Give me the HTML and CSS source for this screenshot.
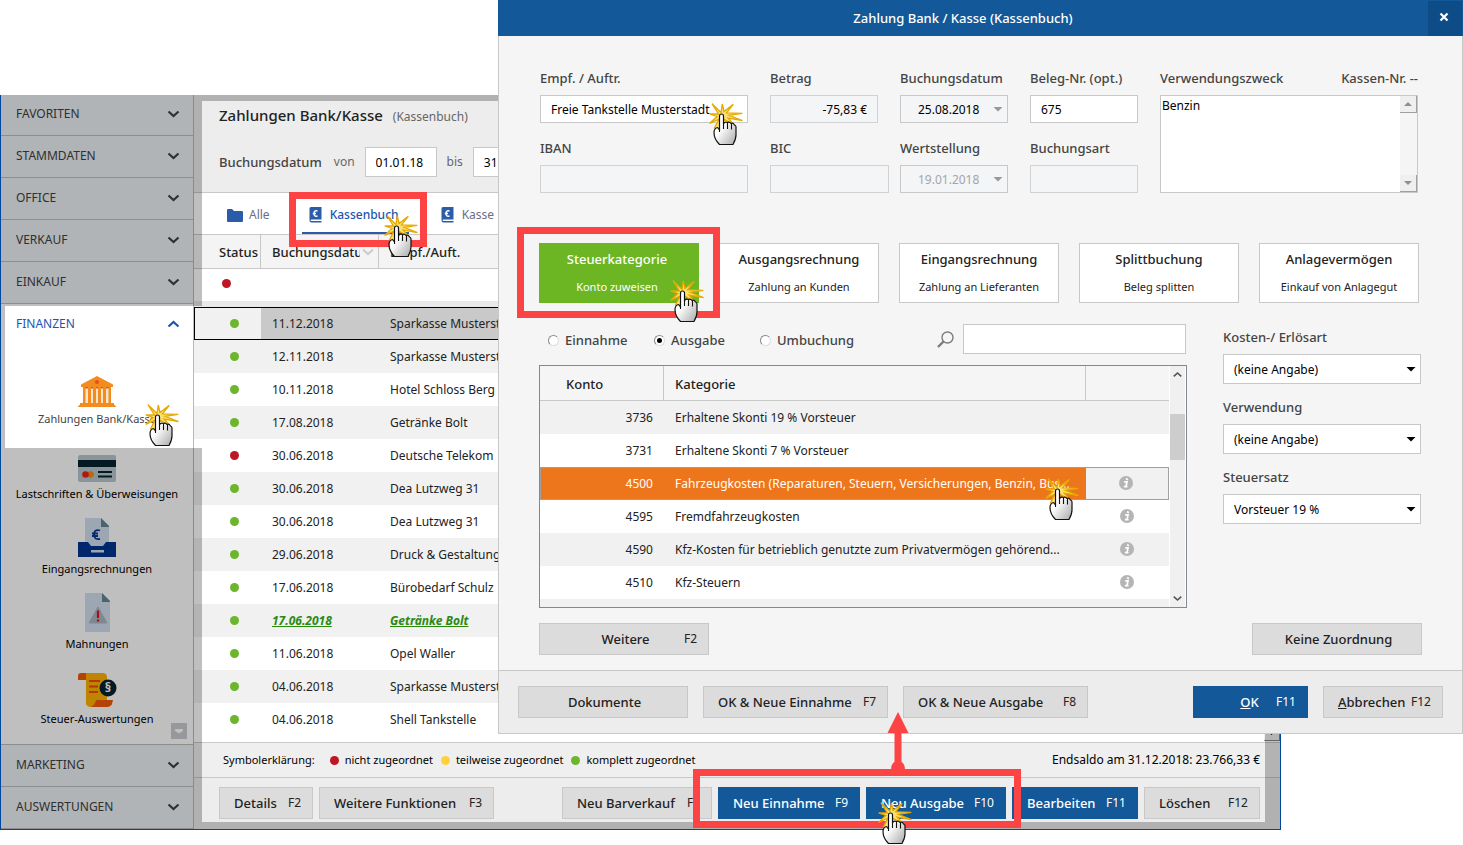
FILE: index.html
```html
<!DOCTYPE html>
<html lang="de">
<head>
  <meta charset="UTF-8">
  <meta name="viewport" content="width=device-width, initial-scale=1.0">
  <title>Zahlung Bank / Kasse (Kassenbuch)</title>
  <link rel="stylesheet" href="styles.css">
</head>
<body>
  <!-- Shared symbols -->
  <svg class="symbols" aria-hidden="true">
    <defs>
      <linearGradient id="hand-fill" x1="0" y1="0" x2="1" y2="1">
        <stop offset="0.4" stop-color="#ffffff"/>
        <stop offset="1" stop-color="#a8a8a8"/>
      </linearGradient>
    </defs>
    <symbol id="cursor" viewBox="0 0 36 44">
      <path d="M12 10.500L13.300 2L15 9.500L24.300 2.300L17.500 10.800L33.300 11.300L20 13.300L33.500 18.700L19 16L26 24L15.500 17.500L9 27.500L5.500 26L10 17L0.700 21.300L8 14.500L0.700 12L9.500 12L3 1.700Z" fill="#fbe277" stroke="#e5a900" stroke-width="1.300"/>
      <path d="M5 30.500Q5 26.500 8.500 25.500L10.500 28V14Q10.500 12 12.500 12T14.500 14V22Q15.500 19.500 18.500 20.500Q20.500 19.500 22 21.500Q24 20.500 25.500 23Q27 23.500 27 25V33Q27 37 24 42.500H10.500Q5 37 5 30.500Z" fill="url(#hand-fill)" stroke="#111" stroke-width="1.200" stroke-linejoin="round"/>
      <path d="M10.500 27V30M14.500 22V27M18.500 21V27M22.500 22V27.500" stroke="#111" stroke-width="1.100" fill="none"/>
    </symbol>
    <symbol id="chevron" viewBox="0 0 12 8">
      <path d="M1 1.500L6 6L11 1.500" fill="none" stroke="currentColor" stroke-width="2.200"/>
    </symbol>
    <symbol id="book" viewBox="0 0 13 16">
      <path d="M2 0H12.500V12.500H2.500Q1.500 12.500 1.500 13.200T2.500 14H12.500V15.500H2.500Q0.500 15.500 0.500 13.500V1.500Q0.500 0 2 0Z" fill="#2a5caa"/>
      <path d="M8.500 4Q5 3 5 6.500T8.500 9M3.800 6.500H7" fill="none" stroke="#fff" stroke-width="1.400"/>
    </symbol>
    <symbol id="info" viewBox="0 0 14 14">
      <circle cx="7" cy="7" r="7" fill="#b5b5b5"/>
      <path d="M5.200 5.800H8L7 10.700H8.500M4.900 10.700H7M7.200 2.500L8.800 3.800" fill="none" stroke="#fff" stroke-width="1.700"/>
    </symbol>
  </svg>

  <div class="desktop">
    <!-- Main window -->
    <div class="app">
      <nav class="sidebar">
        <button class="nav-item">FAVORITEN<svg><use href="#chevron"/></svg></button>
        <button class="nav-item">STAMMDATEN<svg><use href="#chevron"/></svg></button>
        <button class="nav-item">OFFICE<svg><use href="#chevron"/></svg></button>
        <button class="nav-item">VERKAUF<svg><use href="#chevron"/></svg></button>
        <button class="nav-item">EINKAUF<svg><use href="#chevron"/></svg></button>
        <div class="nav-group">
          <button class="nav-item open">FINANZEN<svg><use href="#chevron"/></svg></button>
          <a class="tile" href="#">
            <svg width="40" height="31" viewBox="0 0 40 31">
              <path d="M20 0L36 8.500V11H4V8.500Z" fill="#f28c1e"/>
              <circle cx="20" cy="6" r="2" fill="#e8501e"/>
              <path d="M6 11H34V27H6Z" fill="#fbe6cc"/>
              <path d="M6 11H34V12.500H6Z" fill="#e8501e"/>
              <path d="M6 11H8.500V27H6ZM11 11H14V27H11ZM16 11H19V27H16ZM21 11H24V27H21ZM26 11H29V27H26ZM31.500 11H34V27H31.500ZM3 27H37V28.500L39.500 31H0.500L3 28.500Z" fill="#f28c1e"/>
            </svg>
            <span>Zahlungen Bank/Kasse</span>
          </a>
          <a class="tile dark" href="#">
            <svg width="38" height="27" viewBox="0 0 38 27">
              <rect width="38" height="27" rx="2" fill="#b9c7ce"/>
              <rect y="5" width="38" height="7" fill="#04232e"/>
              <circle cx="12.500" cy="19.500" r="3.300" fill="#f28c1e"/>
              <circle cx="7.500" cy="19.500" r="3.300" fill="#e8201e"/>
              <path d="M20 17H34M20 21.500H34" stroke="#04232e" stroke-width="2"/>
            </svg>
            <span>Lastschriften &amp; Überweisungen</span>
          </a>
          <a class="tile dark" href="#">
            <svg width="38" height="39" viewBox="0 0 38 39">
              <path d="M7 0H23L31 8V30H7Z" fill="#d2dff0"/>
              <path d="M23 0L31 8V9H23Z" fill="#63868f"/>
              <path d="M22 12.500Q16 11 16 16.500T22 21M14 15.500H20M14 18H20" fill="none" stroke="#0a3892" stroke-width="1.800"/>
              <path d="M0 24H10L13 28H25L28 24H38V39H0Z" fill="#003591"/>
              <rect x="13" y="32" width="13" height="2.500" fill="#d2dff0"/>
            </svg>
            <span>Eingangsrechnungen</span>
          </a>
          <a class="tile dark" href="#">
            <svg width="25" height="39" viewBox="0 0 25 39">
              <path d="M0 0H17L25 8V39H0Z" fill="#d2dff0"/>
              <path d="M17 0L25 8V9H17Z" fill="#63868f"/>
              <path d="M13 14L22 30H4Z" fill="#abb5bf" stroke="#abb5bf" stroke-linejoin="round"/>
              <path d="M13 17.500V25M13 26.500V28.500" stroke="#e0102a" stroke-width="2.200"/>
            </svg>
            <span>Mahnungen</span>
          </a>
          <a class="tile dark" href="#">
            <svg width="39" height="34" viewBox="0 0 39 34">
              <path d="M4 0H26Q29 1 29 4V29H34V32L30 34H12Q8 33 8 30V5Z" fill="#ffb000"/>
              <path d="M3 0H8V7H0V3Q0 0 3 0ZM18 27H35Q34 34 29 34H13Q17 32 18 27Z" fill="#f05a0a"/>
              <path d="M11 8H22M11 13.500H20M11 19H20" stroke="#f04a0a" stroke-width="1.800"/>
              <circle cx="30" cy="15" r="8.500" fill="#04232e"/>
              <text x="30" y="19" class="para">§</text>
            </svg>
            <span>Steuer-Auswertungen</span>
          </a>
          <button class="nav-more" aria-label="Mehr anzeigen"></button>
        </div>
        <button class="nav-item">MARKETING<svg><use href="#chevron"/></svg></button>
        <button class="nav-item">AUSWERTUNGEN<svg><use href="#chevron"/></svg></button>
      </nav>

      <main class="content">
        <header class="content-head">
          <h1>Zahlungen Bank/Kasse <small>(Kassenbuch)</small></h1>
          <div class="filter">
            <strong>Buchungsdatum</strong>
            <label for="from">von</label>
            <input id="from" type="text" value="01.01.18">
            <label for="to">bis</label>
            <input id="to" type="text" value="31.12.18">
          </div>
        </header>

        <div class="tabs">
          <button class="tab">
            <svg width="16" height="13" viewBox="0 0 16 13"><path d="M0 1Q0 0 1 0H5L7 2H15Q16 2 16 3V12Q16 13 15 13H1Q0 13 0 12Z" fill="#2a5caa"/></svg>
            Alle
          </button>
          <button class="tab book active"><svg width="13" height="16"><use href="#book"/></svg>Kassenbuch</button>
          <button class="tab book"><svg width="13" height="16"><use href="#book"/></svg>Kasse</button>
        </div>

        <div class="bookings-wrap">
          <table class="bookings">
            <thead>
              <tr>
                <th class="c-status">Status</th>
                <th class="c-date"><div class="sortable"><span>Buchungsdatum</span><svg><use href="#chevron"/></svg></div></th>
                <th>Empf./Auft.</th>
              </tr>
            </thead>
            <tbody>
              <tr class="filter-row"><td><i class="dot red"></i></td><td></td><td></td></tr>
              <tr class="current"><td><i class="dot"></i></td><td>11.12.2018</td><td>Sparkasse Musterstadt</td></tr>
              <tr><td><i class="dot"></i></td><td>12.11.2018</td><td>Sparkasse Musterstadt</td></tr>
              <tr><td><i class="dot"></i></td><td>10.11.2018</td><td>Hotel Schloss Berg</td></tr>
              <tr><td><i class="dot"></i></td><td>17.08.2018</td><td>Getränke Bolt</td></tr>
              <tr><td><i class="dot red"></i></td><td>30.06.2018</td><td>Deutsche Telekom</td></tr>
              <tr><td><i class="dot"></i></td><td>30.06.2018</td><td>Dea Lutzweg 31</td></tr>
              <tr><td><i class="dot"></i></td><td>30.06.2018</td><td>Dea Lutzweg 31</td></tr>
              <tr><td><i class="dot"></i></td><td>29.06.2018</td><td>Druck &amp; Gestaltung</td></tr>
              <tr><td><i class="dot"></i></td><td>17.06.2018</td><td>Bürobedarf Schulz</td></tr>
              <tr class="marked"><td><i class="dot"></i></td><td>17.06.2018</td><td>Getränke Bolt</td></tr>
              <tr><td><i class="dot"></i></td><td>11.06.2018</td><td>Opel Waller</td></tr>
              <tr><td><i class="dot"></i></td><td>04.06.2018</td><td>Sparkasse Musterstadt</td></tr>
              <tr><td><i class="dot"></i></td><td>04.06.2018</td><td>Shell Tankstelle</td></tr>
            </tbody>
          </table>
          <div class="list-scroll"><i class="arrow-down"></i></div>
        </div>

        <div class="legend">
          <span class="legend-title">Symbolerklärung:</span>
          <i class="dot red"></i><span>nicht zugeordnet</span>
          <i class="dot yellow"></i><span>teilweise zugeordnet</span>
          <i class="dot"></i><span>komplett zugeordnet</span>
          <span class="balance">Endsaldo am 31.12.2018: 23.766,33 €</span>
        </div>

        <footer class="actions">
          <button class="btn details">Details<kbd>F2</kbd></button>
          <button class="btn functions">Weitere Funktionen<kbd>F3</kbd></button>
          <button class="btn cash-sale push">Neu Barverkauf<kbd>F8</kbd></button>
          <button class="btn primary income">Neu Einnahme<kbd>F9</kbd></button>
          <button class="btn primary expense">Neu Ausgabe<kbd>F10</kbd></button>
          <button class="btn primary edit">Bearbeiten<kbd>F11</kbd></button>
          <button class="btn delete">Löschen<kbd>F12</kbd></button>
        </footer>
      </main>

      <div class="shade"></div>
    </div>

    <!-- Dialog -->
    <section class="dialog" role="dialog" aria-labelledby="dialog-title">
      <header class="titlebar">
        <h2 id="dialog-title">Zahlung Bank / Kasse (Kassenbuch)</h2>
        <button class="close" aria-label="Schließen"><svg width="10" height="10" viewBox="0 0 10 10"><path d="M1.500 1.500L8.500 8.500M8.500 1.500L1.500 8.500" stroke="#fff" stroke-width="2.200"/></svg></button>
      </header>

      <div class="dialog-body">
        <div class="fields">
          <div class="field"><label for="payee">Empf. / Auftr.</label><input id="payee" type="text" value="Freie Tankstelle Musterstadt"></div>
          <div class="field"><label for="amount">Betrag</label><input id="amount" class="amount" type="text" value="-75,83 €" readonly></div>
          <div class="field"><label for="bookdate">Buchungsdatum</label><div class="select muted"><select id="bookdate"><option>25.08.2018</option></select></div></div>
          <div class="field"><label for="receipt">Beleg-Nr. (opt.)</label><input id="receipt" type="text" value="675"></div>
          <div class="field purpose">
            <div class="label-row"><label for="purpose">Verwendungszweck</label><span>Kassen-Nr. --</span></div>
            <div class="memo">
              <textarea id="purpose">Benzin</textarea>
              <div class="memo-scroll"><i class="arrow-up"></i><i class="arrow-down"></i></div>
            </div>
          </div>
          <div class="field"><label for="iban">IBAN</label><input id="iban" type="text" readonly></div>
          <div class="field bic"><label for="bic">BIC</label><input id="bic" type="text" readonly></div>
          <div class="field"><label for="valuta">Wertstellung</label><div class="select muted"><select id="valuta" disabled><option>19.01.2018</option></select></div></div>
          <div class="field"><label for="booking-type">Buchungsart</label><input id="booking-type" type="text" readonly></div>
        </div>

        <div class="cards">
          <button class="card active"><strong>Steuerkategorie</strong><span>Konto zuweisen</span></button>
          <button class="card"><strong>Ausgangsrechnung</strong><span>Zahlung an Kunden</span></button>
          <button class="card"><strong>Eingangsrechnung</strong><span>Zahlung an Lieferanten</span></button>
          <button class="card"><strong>Splittbuchung</strong><span>Beleg splitten</span></button>
          <button class="card"><strong>Anlagevermögen</strong><span>Einkauf von Anlagegut</span></button>
        </div>

        <div class="assign">
          <div class="assign-left">
            <div class="search-row">
              <label class="radio"><input type="radio" name="kind">Einnahme</label>
              <label class="radio"><input type="radio" name="kind" checked>Ausgabe</label>
              <label class="radio"><input type="radio" name="kind">Umbuchung</label>
              <label class="search" for="search" aria-label="Suche"><svg width="17" height="17" viewBox="0 0 17 17"><circle cx="10.500" cy="6.500" r="5.500" fill="none" stroke="#7c7c7c" stroke-width="1.400"/><path d="M6.500 10.500L1 16" stroke="#7c7c7c" stroke-width="2.400"/></svg></label>
              <input id="search" type="text">
            </div>
            <div class="accounts-box">
              <table class="accounts">
                <thead>
                  <tr><th class="c-konto">Konto</th><th>Kategorie</th><th class="c-info"></th></tr>
                </thead>
                <tbody>
                  <tr><td>3736</td><td>Erhaltene Skonti 19 % Vorsteuer</td><td></td></tr>
                  <tr><td>3731</td><td>Erhaltene Skonti 7 % Vorsteuer</td><td></td></tr>
                  <tr class="selected"><td>4500</td><td>Fahrzeugkosten (Reparaturen, Steuern, Versicherungen, Benzin, Bus...</td><td><svg><use href="#info"/></svg></td></tr>
                  <tr><td>4595</td><td>Fremdfahrzeugkosten</td><td><svg><use href="#info"/></svg></td></tr>
                  <tr><td>4590</td><td>Kfz-Kosten für betrieblich genutzte zum Privatvermögen gehörend...</td><td><svg><use href="#info"/></svg></td></tr>
                  <tr><td>4510</td><td>Kfz-Steuern</td><td><svg><use href="#info"/></svg></td></tr>
                  <tr class="rest"><td></td><td></td><td></td></tr>
                </tbody>
              </table>
              <div class="box-scroll">
                <svg class="up"><use href="#chevron"/></svg>
                <i class="thumb"></i>
                <svg><use href="#chevron"/></svg>
              </div>
            </div>
          </div>

          <div class="assign-right">
            <div class="field"><label for="cost">Kosten-/ Erlösart</label><div class="select"><select id="cost"><option>(keine Angabe)</option></select></div></div>
            <div class="field"><label for="usage">Verwendung</label><div class="select"><select id="usage"><option>(keine Angabe)</option></select></div></div>
            <div class="field"><label for="tax">Steuersatz</label><div class="select"><select id="tax"><option>Vorsteuer 19 %</option></select></div></div>
          </div>
        </div>

        <div class="assign-actions">
          <button class="btn wide">Weitere<kbd>F2</kbd></button>
          <button class="btn wide">Keine Zuordnung</button>
        </div>
      </div>

      <footer class="dialog-foot">
        <button class="btn wide">Dokumente</button>
        <button class="btn save">OK &amp; Neue Einnahme<kbd>F7</kbd></button>
        <button class="btn save">OK &amp; Neue Ausgabe<kbd>F8</kbd></button>
        <button class="btn primary ok push"><span class="grow"><u>O</u>K</span><kbd>F11</kbd></button>
        <button class="btn cancel"><span><u>A</u>bbrechen</span><kbd>F12</kbd></button>
      </footer>
    </section>

    <!-- Highlights and pointers -->
    <div class="mark mark-tab"></div>
    <div class="mark mark-card"></div>
    <div class="mark mark-new"></div>
    <svg class="link-arrow" width="22" height="58" viewBox="0 0 22 58"><path d="M11 0L21.500 21H14.500V50Q18 52 18 58H4Q4 52 7.500 50V21H0.500Z" fill="#fd4444"/></svg>
    <svg class="cursor at-tile"><use href="#cursor"/></svg>
    <svg class="cursor at-payee"><use href="#cursor"/></svg>
    <svg class="cursor at-card"><use href="#cursor"/></svg>
    <svg class="cursor at-tab"><use href="#cursor"/></svg>
    <svg class="cursor at-account"><use href="#cursor"/></svg>
    <svg class="cursor at-expense"><use href="#cursor"/></svg>
  </div>
</body>
</html>
```

FILE: styles.css
```css
/* Global */
* {
  box-sizing: border-box;
}

body {
  margin: 0;
  background: #fff;
  color: #222;
  font-family: "Noto Sans", "Open Sans", sans-serif;
  font-size: 12px;
  line-height: 20px;
}

button,
input,
select,
textarea {
  font: inherit;
  color: inherit;
  margin: 0;
  border-radius: 0;
}

button {
  cursor: pointer;
}

a {
  color: inherit;
  text-decoration: none;
}

.symbols {
  position: absolute;
  width: 0;
  height: 0;
}

.desktop {
  position: relative;
  padding: 95px 182px 15px 0;
}

/* Main window */
.app {
  position: relative;
  display: flex;
  border: 1px solid #00479f;
  border-top: 0;
  background: #fff;
}

/* everything outside the active parts is darkened */
.shade {
  position: absolute;
  inset: 0;
  background: rgba(0, 0, 0, 0.25);
  pointer-events: none;
  clip-path: polygon(evenodd,
    0 0, 100% 0, 100% 100%, 0 100%, 0 0,
    201px 6px, calc(100% - 15px) 6px, calc(100% - 15px) calc(100% - 7px), 201px calc(100% - 7px), 201px 353px, 4px 353px, 4px 211px, 201px 211px, 201px 6px, 0 0);
}

/* Sidebar */
.sidebar {
  width: 193px;
  flex: none;
  border-right: 1px solid #b9b9b9;
}

.nav-item {
  display: flex;
  align-items: center;
  justify-content: space-between;
  width: 100%;
  height: 42px;
  padding: 0 13px 2px 15px;
  border: 0;
  border-bottom: 1px solid #bcbcbc;
  background: #edf0f3;
  color: #404040;
}

.nav-item:first-child {
  height: 41px;
}

.nav-item svg {
  width: 13px;
  height: 8px;
}

.nav-item.open {
  border: 0;
  background: #fff;
  color: #1a56b0;
}

.nav-item.open svg {
  transform: rotate(180deg);
}

.nav-group {
  position: relative;
  padding-bottom: 13px;
  border-bottom: 1px solid #bcbcbc;
}

.tile {
  display: flex;
  flex-direction: column;
  align-items: center;
  justify-content: flex-end;
  height: 75px;
  color: #444;
  font-size: 11px;
  line-height: 24px;
  white-space: nowrap;
}

.nav-item.open + .tile {
  margin-top: 11px;
}

.tile.dark {
  color: #000;
}

.para {
  fill: #fff;
  font-size: 13px;
  font-weight: 700;
  text-anchor: middle;
}

.nav-more {
  position: absolute;
  right: 6px;
  bottom: 5px;
  width: 16px;
  height: 16px;
  padding: 0;
  border: 0;
  background: #c9cbcf;
}

.nav-more::after {
  content: "";
  display: block;
  width: 8px;
  height: 5px;
  margin: 0 auto;
  background: #fff;
  clip-path: polygon(0 0, 100% 0, 100% 50%, 50% 100%, 0 50%);
}

/* Content */
.content {
  flex: 1;
  min-width: 0;
  display: flex;
  flex-direction: column;
}

.content-head {
  height: 98px;
  padding: 10px 25px 0;
  background: #ededed;
  border-bottom: 1px solid #c8c8c8;
}

h1 {
  margin: 0;
  font-size: 15px;
  font-weight: 500;
  line-height: 20px;
}

h1 small {
  margin-left: 6px;
  color: #666;
  font-size: 12px;
  font-weight: 400;
}

.filter {
  display: flex;
  align-items: center;
  margin-top: 20px;
  color: #666;
}

.filter strong {
  margin-right: 12px;
  color: #444;
  font-size: 13px;
  font-weight: 500;
}

.filter input {
  width: 72px;
  height: 30px;
  margin: 0 10px;
  padding: 0 10px;
  border: 1px solid #c8c8c8;
  background: #fff;
  color: #000;
}

.tabs {
  display: flex;
  gap: 25px;
  height: 42px;
  padding-left: 26px;
  background: #fff;
  border-bottom: 1px solid #c8c8c8;
}

.tab {
  display: flex;
  align-items: center;
  gap: 6px;
  padding: 3px 7px 0;
  border: 0;
  background: none;
  color: #6d6d85;
}

.tab.book {
  gap: 8px;
}

.tab.active {
  min-width: 107px;
  color: #1a56b0;
  font-weight: 500;
  box-shadow: inset 0 -2px #2a5caa;
}

/* Bookings */
.bookings-wrap {
  flex: 1;
  position: relative;
}

.bookings {
  width: 100%;
  table-layout: fixed;
  border-collapse: separate;
  border-spacing: 0;
}

.bookings th {
  height: 34px;
  padding: 0 0 0 11px;
  background: #f4f4f4;
  border-bottom: 1px solid #c8c8c8;
  border-right: 1px solid #c8c8c8;
  font-size: 13px;
  font-weight: 500;
  text-align: left;
}

.bookings .c-status {
  width: 67px;
  padding: 0 2px 0 0;
  text-align: right;
}

.bookings .c-date {
  width: 118px;
}

.sortable {
  display: flex;
  align-items: center;
  justify-content: space-between;
  padding-right: 4px;
}

.sortable span {
  width: 88px;
  overflow: hidden;
}

.sortable svg {
  width: 12px;
  height: 8px;
  color: #ccc;
}

.bookings td {
  height: 33px;
  padding: 0 0 0 11px;
  white-space: nowrap;
}

.bookings td:first-child {
  padding: 0 0 0 13px;
  text-align: center;
}

.bookings tr:nth-child(odd) td {
  background: #f1f1f1;
}

.bookings tr.filter-row td {
  height: 38px;
  padding: 0 2px 2px 0;
  background: #fff;
  border-bottom: 6px solid #e9e9e9;
}

.bookings tr.current td {
  background: #c9c9c9;
  border-top: 1px solid #000;
  border-bottom: 1px solid #000;
}

.bookings tr.current td:first-child {
  background: #f1f1f1;
  border-left: 1px solid #000;
}

.bookings .marked td {
  color: #2a8a10;
  font-style: italic;
  font-weight: 700;
  text-decoration: underline;
}

.dot {
  display: inline-block;
  flex: none;
  width: 9px;
  height: 9px;
  border-radius: 50%;
  background: #6cb52d;
}

.dot.red {
  background: #be1622;
}

.dot.yellow {
  background: #ffd23c;
}

.list-scroll {
  position: absolute;
  right: 0;
  bottom: 1px;
  width: 16px;
  height: 18px;
  background: #f0f0f0;
  border-right: 1px solid #888;
  border-bottom: 1px solid #888;
}

.list-scroll .arrow-down {
  display: block;
  margin: 8px auto 0;
}

/* Legend */
.legend {
  display: flex;
  align-items: center;
  height: 36px;
  padding: 0 20px 0 29px;
  border-top: 1px solid #c8c8c8;
  border-bottom: 1px solid #c8c8c8;
  background: #efefef;
  color: #000;
  font-size: 11px;
}

.legend-title {
  margin-right: 7px;
}

.legend .dot {
  margin: 0 6px 0 8px;
}

.legend .balance {
  margin-left: auto;
  font-size: 12px;
}

/* Buttons */
.actions {
  display: flex;
  align-items: center;
  gap: 6px;
  height: 51px;
  padding: 0 20px 1px 25px;
  background: #ededed;
}

.btn {
  display: flex;
  align-items: center;
  justify-content: space-between;
  height: 32px;
  padding: 0 11px 0 14px;
  border: 1px solid #c8c8c8;
  background: #dcdcdc;
  color: #222;
  font-size: 13px;
  font-weight: 500;
  white-space: nowrap;
}

.btn kbd {
  font-family: inherit;
  font-size: 12px;
  font-weight: 400;
}

.btn.primary {
  border-color: #135899;
  background: #135899;
  color: #fff;
}

.push {
  margin-left: auto;
}

.details {
  width: 94px;
}

.functions {
  width: 175px;
}

.cash-sale {
  width: 150px;
}

.income {
  width: 142px;
}

.expense {
  width: 140px;
}

.edit {
  width: 126px;
}

.delete {
  width: 116px;
}

/* Dialog */
.dialog {
  position: absolute;
  top: 0;
  left: 498px;
  right: 0;
  border: 1px solid #c8c8c8;
  border-top: 0;
  background: #f5f5f5;
}

.titlebar {
  display: flex;
  align-items: center;
  height: 36px;
  margin: 0 -1px;
  background: #135899;
  color: #fff;
}

.titlebar h2 {
  flex: 1;
  margin: 0;
  font-size: 13px;
  font-weight: 500;
  text-align: center;
}

.close {
  display: flex;
  align-items: center;
  justify-content: center;
  width: 34px;
  height: 35px;
  margin-right: 1px;
  padding: 0 2px 2px 0;
  border: 0;
  background: #0d4c86;
}

.dialog-body {
  padding: 32px 40px 15px;
}

.fields {
  display: grid;
  grid-template-columns: 208px 108px 108px 108px 1fr;
  gap: 15px 22px;
  padding: 0 4px 0 1px;
}

.field {
  display: flex;
  flex-direction: column;
  gap: 7px;
  min-width: 0;
}

.field label,
.label-row {
  color: #444;
  font-size: 13px;
  font-weight: 500;
  white-space: nowrap;
}

.label-row {
  display: flex;
  justify-content: space-between;
}

.field input {
  width: 100%;
  height: 28px;
  padding: 0 10px;
  border: 1px solid #c8c8c8;
  background: #fff;
  color: #000;
}

.field input:read-only {
  background: #f4f5f7;
  border-color: #d0d2d4;
}

.field .amount {
  text-align: right;
}

.bic {
  margin-right: -11px;
}

.purpose {
  grid-row: span 2;
}

.memo {
  display: flex;
  flex: 1;
  border: 1px solid #c8c8c8;
  background: #fff;
}

.memo textarea {
  flex: 1;
  min-width: 0;
  height: 96px;
  padding: 0 1px;
  border: 0;
  background: none;
  color: #000;
  resize: none;
  overflow: hidden;
}

.memo-scroll {
  display: flex;
  flex-direction: column;
  justify-content: space-between;
  width: 17px;
  background: #f5f5f5;
}

.memo-scroll i {
  display: flex;
  align-items: center;
  justify-content: center;
  width: 17px;
  height: 17px;
  border: 1px solid #a0a0a0;
  border-width: 0 1px 1px 0;
  background: #efefef;
}

.memo-scroll .arrow-up::after,
.memo-scroll .arrow-down::after,
.list-scroll .arrow-down,
.select::after {
  content: "";
  width: 10px;
  height: 5px;
  background: #8f8f8f;
  clip-path: polygon(0 0, 100% 0, 50% 100%);
}

.memo-scroll .arrow-up::after {
  width: 8px;
  height: 4px;
  clip-path: polygon(50% 0, 100% 100%, 0 100%);
}

.memo-scroll .arrow-down::after {
  width: 8px;
  height: 4px;
}

.list-scroll .arrow-down {
  width: 8px;
  height: 4px;
  background: #000;
}

/* Drop-downs */
.select {
  display: flex;
  align-items: center;
  height: 30px;
  padding-right: 4px;
  border: 1px solid #c8c8c8;
  background: #fff;
}

.select select {
  flex: 1;
  min-width: 0;
  height: 100%;
  padding: 1px 0 0 10px;
  border: 0;
  background: none;
  color: #000;
  appearance: none;
}

.select::after {
  background: #000;
}

.select.muted {
  height: 28px;
  background: #f4f5f7;
}

.select.muted select {
  padding-left: 17px;
}

.select.muted select:disabled {
  color: #a5a5a5;
  opacity: 1;
}

.select.muted::after {
  background: #999;
}

/* Cards */
.cards {
  display: grid;
  grid-template-columns: repeat(5, 1fr);
  gap: 20px;
  margin-top: 50px;
  padding-right: 3px;
}

.card {
  display: flex;
  flex-direction: column;
  align-items: center;
  justify-content: center;
  gap: 8px;
  height: 60px;
  padding: 0;
  border: 1px solid #c8c8c8;
  background: #fff;
  color: #222;
  font-size: 11px;
  white-space: nowrap;
}

.card strong {
  font-size: 13px;
  font-weight: 500;
}

.card.active {
  padding-right: 4px;
  border-color: #6cb523;
  background: #6cb523;
  color: #fff;
}

/* Account assignment */
.assign {
  display: flex;
  gap: 35px;
  margin-top: 21px;
}

.assign-left {
  flex: 1;
  min-width: 0;
}

.search-row {
  display: flex;
  align-items: center;
  height: 30px;
  padding: 0 1px 0 9px;
}

.search-row input[type="text"] {
  width: 223px;
  height: 30px;
  padding: 0 10px;
  border: 1px solid #c8c8c8;
  background: #fff;
}

.radio {
  display: flex;
  align-items: center;
  gap: 6px;
  width: 106px;
  padding-top: 2px;
  color: #444;
  font-size: 13px;
  font-weight: 500;
}

.radio input {
  display: grid;
  place-items: center;
  width: 11px;
  height: 11px;
  border: 1px solid #8a8a8a;
  border-right-color: #ddd;
  border-bottom-color: #ddd;
  border-radius: 50%;
  background: #fff;
  appearance: none;
}

.radio input:checked::after {
  content: "";
  width: 5px;
  height: 5px;
  border-radius: 50%;
  background: #000;
}

.search {
  display: flex;
  margin: 0 9px 0 auto;
}

.accounts-box {
  display: flex;
  gap: 1px;
  height: 243px;
  margin-top: 11px;
  padding-right: 1px;
  border: 1px solid #828790;
  background: #fff;
  overflow: hidden;
}

.accounts {
  flex: 1;
  width: 100%;
  height: 254px;
  table-layout: fixed;
  border-collapse: separate;
  border-spacing: 0;
}

.accounts th {
  height: 35px;
  padding: 2px 0 0 11px;
  border-right: 1px solid #c8c8c8;
  border-bottom: 1px solid #c8c8c8;
  background: #f5f5f5;
  font-size: 13px;
  font-weight: 500;
  text-align: left;
}

.accounts .c-konto {
  width: 124px;
  padding-left: 26px;
}

.accounts .c-info {
  width: 83px;
  border-right: 0;
}

.accounts td {
  height: 33px;
  padding: 0 0 0 11px;
  white-space: nowrap;
}

.accounts td:first-child {
  padding: 0 11px 0 0;
  text-align: right;
}

.accounts td:last-child {
  padding: 0 2px 2px 0;
  text-align: center;
}

.accounts td svg {
  display: block;
  width: 14px;
  height: 14px;
  margin: 0 auto;
}

.accounts tbody tr:nth-child(odd) td {
  background: #f1f1f1;
}

.accounts tbody tr.selected td {
  border: 1px solid #a0a0a0;
  border-width: 1px 0;
  background: #ed751c;
  color: #fff;
}

.accounts tbody tr.selected td:first-child {
  border-left-width: 1px;
}

.accounts tbody tr.selected td:last-child {
  border-right-width: 1px;
  background: #f1f1f1;
}

.box-scroll {
  display: flex;
  flex-direction: column;
  align-items: center;
  justify-content: space-between;
  width: 15px;
  padding: 5px 0;
  background: #f0f0f0;
}

.box-scroll svg {
  width: 9px;
  height: 7px;
  color: #555;
}

.box-scroll .up {
  transform: rotate(180deg);
}

.thumb {
  width: 15px;
  height: 46px;
  margin-bottom: 100px;
  background: #cdcdcd;
}

.assign-right {
  display: flex;
  flex-direction: column;
  gap: 13px;
  width: 200px;
  padding: 3px 1px 0;
}

.assign-actions {
  display: flex;
  justify-content: space-between;
  margin-top: 15px;
}

.wide {
  width: 170px;
  justify-content: center;
  position: relative;
}

.wide kbd {
  position: absolute;
  right: 11px;
}

.dialog-foot {
  display: flex;
  align-items: center;
  gap: 15px;
  height: 63px;
  padding: 0 19px;
  border-top: 1px solid #c8c8c8;
  background: #ededed;
}

.save {
  width: 185px;
}

.ok {
  width: 115px;
}

.ok .grow {
  flex: 1;
  padding-left: 15px;
  text-align: center;
}

.cancel {
  width: 120px;
}

/* Highlights and pointers */
.mark {
  position: absolute;
  border: 7px solid #fd4444;
  pointer-events: none;
}

.mark-tab {
  left: 289px;
  top: 192px;
  width: 138px;
  height: 55px;
}

.mark-card {
  left: 517px;
  top: 227px;
  width: 203px;
  height: 91px;
}

.mark-new {
  left: 693px;
  top: 769px;
  width: 328px;
  height: 59px;
}

.link-arrow {
  position: absolute;
  left: 887px;
  top: 712px;
}

.cursor {
  position: absolute;
  width: 36px;
  height: 44px;
  pointer-events: none;
}

.at-tile {
  left: 145px;
  top: 403px;
}

.at-payee {
  left: 709px;
  top: 102px;
}

.at-card {
  left: 670px;
  top: 279px;
}

.at-tab {
  left: 384px;
  top: 214px;
}

.at-account {
  left: 1045px;
  top: 477px;
}

.at-expense {
  left: 878px;
  top: 801px;
}
```
